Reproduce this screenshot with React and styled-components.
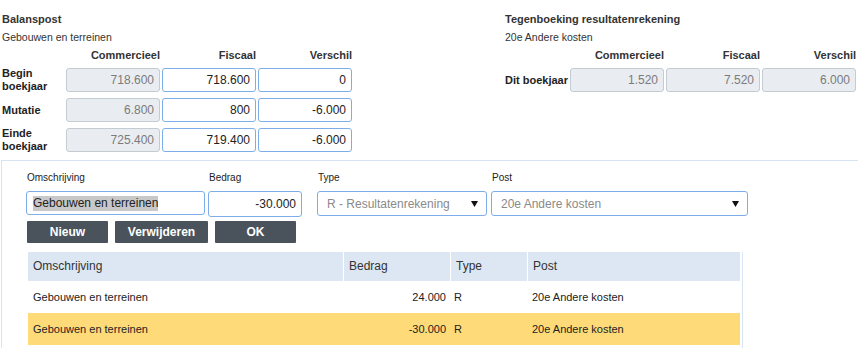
import React from 'react';
import styled, { createGlobalStyle } from 'styled-components';

const GlobalStyle = createGlobalStyle`
  html, body {
    margin: 0;
    padding: 0;
    background: #fff;
  }
  body {
    font-family: "Liberation Sans", Arial, sans-serif;
    color: #333;
  }
`;

const Page = styled.div`
  width: 858px;
  height: 348px;
  overflow: hidden;
`;

const Summary = styled.div`
  display: flex;
  gap: 153px;
  box-sizing: border-box;
  height: 160px;
  padding: 12px 0 0 2px;
`;

const Block = styled.div`
  display: flex;
  flex-direction: column;
`;

const Title = styled.div`
  font-size: 11px;
  font-weight: bold;
  line-height: 14px;
  color: #333;
`;

const Subtitle = styled.div`
  margin-top: 4px;
  font-size: 10.5px;
  line-height: 14px;
  color: #333;
`;

const Grid = styled.div`
  display: grid;
  grid-template-columns: ${p => p.$label}px repeat(3, 94px);
  grid-template-rows: 14px;
  grid-auto-rows: 24px;
  column-gap: 2px;
  row-gap: 6px;
  margin-top: 4px;
`;

const ColHead = styled.div`
  font-size: 11px;
  font-weight: bold;
  line-height: 14px;
  text-align: right;
  color: #333;
`;

const RowLabel = styled.div`
  align-self: center;
  font-size: 11px;
  font-weight: bold;
  line-height: 13px;
  color: #222;
  white-space: ${p => (p.$nowrap ? 'nowrap' : 'normal')};
`;

const NumBox = styled.div`
  box-sizing: border-box;
  height: 24px;
  padding-right: 5px;
  border: 1px solid ${p => (p.$readOnly ? '#c3cbd3' : '#7eaee9')};
  border-radius: 3px;
  background: ${p => (p.$readOnly ? '#e9edf1' : '#fff')};
  color: ${p => (p.$readOnly ? '#7b7b7b' : '#222')};
  font-size: 12px;
  line-height: 22px;
  text-align: right;
`;

const Panel = styled.div`
  box-sizing: border-box;
  height: 188px;
  margin-left: 1px;
  padding: 10px 0 0 24px;
  border-top: 1px solid #d7e4f3;
  border-left: 1px solid #d7e4f3;
`;

const FieldRow = styled.div`
  display: flex;
  align-items: flex-start;
`;

const Field = styled.div`
  display: flex;
  flex-direction: column;
  width: ${p => p.$width}px;
`;

const FieldLabel = styled.div`
  margin-bottom: 6px;
  padding-left: 1px;
  font-size: 10px;
  line-height: 14px;
  color: #222;
`;

const TextBox = styled.div`
  box-sizing: border-box;
  width: ${p => p.$width}px;
  height: ${p => p.$height || 24}px;
  padding: 0 5px 0 6px;
  border: 1px solid #7eaee9;
  border-radius: 3px;
  background: #fff;
  color: #222;
  font-size: 12px;
  line-height: ${p => (p.$height || 24) - 2}px;
  text-align: ${p => (p.$right ? 'right' : 'left')};
  white-space: nowrap;
`;

const Selected = styled.span`
  display: inline-block;
  line-height: 15px;
  background: #c8c8c8;
  vertical-align: middle;
`;

const SelectBox = styled.div`
  box-sizing: border-box;
  display: flex;
  align-items: center;
  justify-content: space-between;
  width: ${p => p.$width}px;
  height: 25px;
  padding: 0 8px 0 9px;
  border: 1px solid #7eaee9;
  border-radius: 3px;
  background: #fff;
  color: #8a8a8a;
  font-size: 12px;
  white-space: nowrap;
`;

const ButtonRow = styled.div`
  display: flex;
  gap: 7px;
  margin: 4px 0 0 1px;
`;

const Button = styled.button`
  width: ${p => p.$width}px;
  height: 22px;
  padding: 0;
  border: none;
  border-radius: 1px;
  background: #4a535b;
  color: #fff;
  font-family: "Liberation Sans", Arial, sans-serif;
  font-size: 12px;
  font-weight: bold;
  line-height: 22px;
`;

const TableWrap = styled.div`
  width: 712px;
  margin: 9px 0 0 2px;
  padding: 0 2px 12px 0;
  border-right: 1px solid #d7e4f3;
`;

const COLS = '315px 106px 76px 212px';

const HeaderRow = styled.div`
  display: grid;
  grid-template-columns: ${COLS};
  column-gap: 1px;
  height: 29px;
`;

const HeaderCell = styled.div`
  padding-left: 5px;
  background: #dce7f3;
  color: #333;
  font-size: 12px;
  line-height: 29px;
`;

const BodyRow = styled.div`
  display: grid;
  grid-template-columns: ${COLS};
  column-gap: 1px;
  height: 32px;
  background: ${p => (p.$active ? '#fedb78' : '#fff')};
`;

const Cell = styled.div`
  padding: ${p => (p.$right ? '0 4px 0 0' : `0 0 0 ${p.$pad ?? 4}px`)};
  color: #222;
  font-size: 11px;
  line-height: 32px;
  text-align: ${p => (p.$right ? 'right' : 'left')};
  white-space: nowrap;
`;

const Caret = () => (
  <svg width="7" height="6" viewBox="0 0 7 6">
    <polygon points="0,0 7,0 3.5,6" fill="#111" />
  </svg>
);

const balans = [
  { label: 'Begin boekjaar', values: ['718.600', '718.600', '0'] },
  { label: 'Mutatie', values: ['6.800', '800', '-6.000'] },
  { label: 'Einde boekjaar', values: ['725.400', '719.400', '-6.000'] },
];

const rows = [
  { oms: 'Gebouwen en terreinen', bedrag: '24.000', type: 'R', post: '20e Andere kosten' },
  { oms: 'Gebouwen en terreinen', bedrag: '-30.000', type: 'R', post: '20e Andere kosten', active: true },
];

export default function App() {
  return (
    <Page>
      <GlobalStyle />
      <Summary>
        <Block>
          <Title>Balanspost</Title>
          <Subtitle>Gebouwen en terreinen</Subtitle>
          <Grid $label={62}>
            <div />
            <ColHead>Commercieel</ColHead>
            <ColHead>Fiscaal</ColHead>
            <ColHead>Verschil</ColHead>
            {balans.map(r => (
              <React.Fragment key={r.label}>
                <RowLabel>{r.label}</RowLabel>
                <NumBox $readOnly>{r.values[0]}</NumBox>
                <NumBox>{r.values[1]}</NumBox>
                <NumBox>{r.values[2]}</NumBox>
              </React.Fragment>
            ))}
          </Grid>
        </Block>
        <Block>
          <Title>Tegenboeking resultatenrekening</Title>
          <Subtitle>20e Andere kosten</Subtitle>
          <Grid $label={63}>
            <div />
            <ColHead>Commercieel</ColHead>
            <ColHead>Fiscaal</ColHead>
            <ColHead>Verschil</ColHead>
            <RowLabel $nowrap>Dit boekjaar</RowLabel>
            <NumBox $readOnly>1.520</NumBox>
            <NumBox $readOnly>7.520</NumBox>
            <NumBox $readOnly>6.000</NumBox>
          </Grid>
        </Block>
      </Summary>

      <Panel>
        <FieldRow>
          <Field $width={182}>
            <FieldLabel>Omschrijving</FieldLabel>
            <TextBox $width={179}>
              <Selected>Gebouwen en terreinen</Selected>
            </TextBox>
          </Field>
          <Field $width={109}>
            <FieldLabel>Bedrag</FieldLabel>
            <TextBox $width={94} $height={26} $right>-30.000</TextBox>
          </Field>
          <Field $width={174}>
            <FieldLabel>Type</FieldLabel>
            <SelectBox $width={170}>
              <span>R - Resultatenrekening</span>
              <Caret />
            </SelectBox>
          </Field>
          <Field $width={258}>
            <FieldLabel>Post</FieldLabel>
            <SelectBox $width={257}>
              <span>20e Andere kosten</span>
              <Caret />
            </SelectBox>
          </Field>
        </FieldRow>

        <ButtonRow>
          <Button $width={81}>Nieuw</Button>
          <Button $width={93}>Verwijderen</Button>
          <Button $width={81}>OK</Button>
        </ButtonRow>

        <TableWrap>
          <HeaderRow>
            <HeaderCell>Omschrijving</HeaderCell>
            <HeaderCell>Bedrag</HeaderCell>
            <HeaderCell>Type</HeaderCell>
            <HeaderCell>Post</HeaderCell>
          </HeaderRow>
          {rows.map((r, i) => (
            <BodyRow key={i} $active={r.active}>
              <Cell $pad={5}>{r.oms}</Cell>
              <Cell $right>{r.bedrag}</Cell>
              <Cell $pad={3}>{r.type}</Cell>
              <Cell>{r.post}</Cell>
            </BodyRow>
          ))}
        </TableWrap>
      </Panel>
    </Page>
  );
}
